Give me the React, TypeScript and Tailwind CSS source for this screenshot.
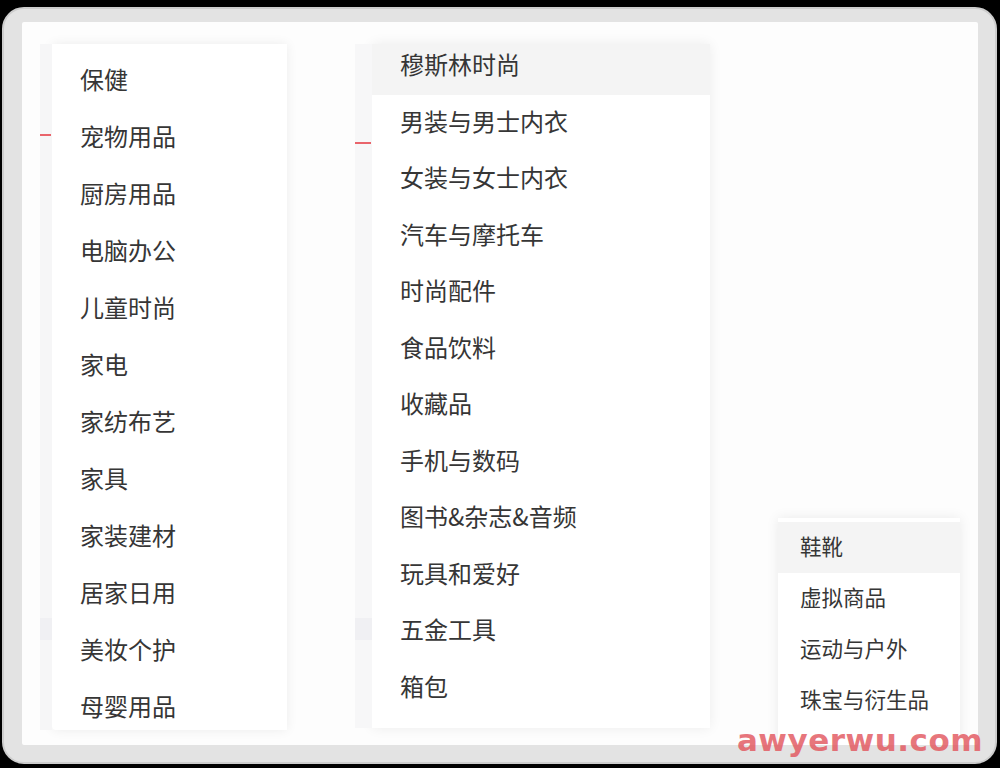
import React from "react";

const left = ["保健", "宠物用品", "厨房用品", "电脑办公", "儿童时尚", "家电", "家纺布艺", "家具", "家装建材", "居家日用", "美妆个护", "母婴用品"];
const middle = ["穆斯林时尚", "男装与男士内衣", "女装与女士内衣", "汽车与摩托车", "时尚配件", "食品饮料", "收藏品", "手机与数码", "图书&杂志&音频", "玩具和爱好", "五金工具", "箱包"];
const right = ["鞋靴", "虚拟商品", "运动与户外", "珠宝与衍生品"];

const font = { fontFamily: '"Noto Sans CJK SC", "Noto Sans", sans-serif' };

export default function App() {
  return (
    <div className="w-[1000px] h-[768px] bg-black overflow-hidden pt-[7px] pl-[2px] pr-[3px]" style={font}>
      <div className="relative h-[757px] rounded-[22px] bg-[#e3e3e3] border-[2px] border-[#cdcdcd] pt-[13px] pl-[18px] pr-[17px]">
        <div className="relative h-[723px] bg-[#fdfdfd] rounded-[2px] overflow-hidden flex items-start">
          {/* left group */}
          <div className="flex items-start mt-[22px] ml-[18px]">
            <div className="relative w-[12px] h-[686px] bg-[#f6f6f7]">
              <div className="absolute left-0 top-[90px] w-[11px] h-[2px] bg-[#e9646b]" />
              <div className="absolute left-0 top-[574px] w-[12px] h-[22px] bg-[#f0f0f3]" />
            </div>
            <div className="w-[235px] h-[686px] bg-white overflow-hidden shadow-[0_0_12px_rgba(0,0,0,0.07)] pt-[8px] rounded-bl-[4px]">
              {left.map((t) => (
                <div key={t} className="h-[57px] flex items-center pl-[28px] pb-[4px] text-[24px] text-[#363636] leading-none whitespace-nowrap">
                  {t}
                </div>
              ))}
            </div>
          </div>
          {/* middle group */}
          <div className="flex items-start mt-[22px] ml-[68px]">
            <div className="relative w-[17px] h-[684px] bg-[#f7f7f8]">
              <div className="absolute left-0 top-[98px] w-[16px] h-[2px] bg-[#e9646b]" />
              <div className="absolute left-0 top-[574px] w-[17px] h-[22px] bg-[#f0f0f3]" />
            </div>
            <div className="w-[338px] h-[684px] bg-white overflow-hidden shadow-[0_0_12px_rgba(0,0,0,0.07)]">
              <div className="-mt-[6px]">
                {middle.map((t, i) => (
                  <div
                    key={t}
                    className={`h-[56.5px] flex items-center pl-[28px] pb-[4px] text-[24px] text-[#363636] leading-none whitespace-nowrap ${i === 0 ? "bg-[#f4f4f4]" : ""}`}
                  >
                    {t}
                  </div>
                ))}
              </div>
            </div>
          </div>
          {/* right panel */}
          <div className="w-[182px] h-[227px] mt-[496px] ml-[68px] bg-white shadow-[0_0_12px_rgba(0,0,0,0.08)] pt-[4px]">
            {right.map((t, i) => (
              <div
                key={t}
                className={`h-[51px] flex items-center pl-[22px] pb-[4px] text-[21.5px] text-[#363636] leading-none whitespace-nowrap ${i === 0 ? "bg-[#f4f4f4]" : ""}`}
              >
                {t}
              </div>
            ))}
          </div>
        </div>
        {/* watermark */}
        <div
          className="absolute right-[12px] bottom-[6px] text-[31px] font-bold leading-none text-[#e2545c] opacity-80 tracking-[0.5px]"
          style={{ fontFamily: '"DejaVu Sans", sans-serif' }}
        >
          awyerwu.com
        </div>
      </div>
    </div>
  );
}
